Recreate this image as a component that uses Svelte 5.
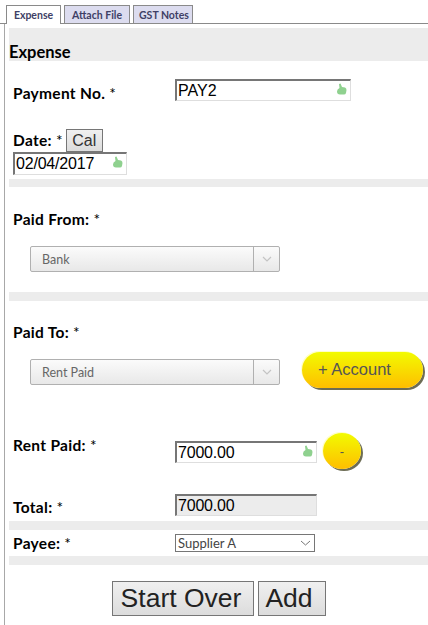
<script>
  const tabs = ["Expense", "Attach File", "GST Notes"];
</script>

{#snippet thumb()}
  <svg class="thumb" width="11" height="12" viewBox="0 0 11 12">
    <path d="M3 1 L4.5 0.5 L6 4 L9 4.5 Q10.5 5 10.5 7 L10 10 Q9.5 11.5 8 11.5 L4 11.5 Q1 11.5 1 8.5 Q1 6 3.5 5 Z" fill="#8fd18f" />
  </svg>
{/snippet}

{#snippet combo(text)}
  <div class="combo">
    <span class="combo-text">{text}</span>
    <span class="combo-arrow">
      <svg width="10" height="6" viewBox="0 0 10 6"><path d="M1 1 L5 5 L9 1" fill="none" stroke="#c4c4c4" stroke-width="1.2" /></svg>
    </span>
  </div>
{/snippet}

<div class="page">
  <div class="tabs">
    {#each tabs as tab, i}
      <div class="tab" class:active={i === 0}>{tab}</div>
    {/each}
  </div>

  <div class="panel">
    <h3 class="band heading">Expense</h3>

    <div class="row payment">
      <span class="label">Payment No. <i>*</i></span>
      <div class="field wide"><span>PAY2</span>{@render thumb()}</div>
    </div>

    <div class="date-row">
      <span class="label">Date: <i>*</i></span>
      <button class="cal">Cal</button>
    </div>
    <div class="field date"><span>02/04/2017</span>{@render thumb()}</div>

    <div class="band thin first"></div>

    <div class="label stacked from">Paid From: <i>*</i></div>
    {@render combo("Bank")}

    <div class="band thin second"></div>

    <div class="label stacked to">Paid To: <i>*</i></div>
    <div class="to-row">
      {@render combo("Rent Paid")}
      <button class="yellow account">+ Account</button>
    </div>

    <div class="row rent">
      <span class="label">Rent Paid: <i>*</i></span>
      <div class="field amount"><span>7000.00</span>{@render thumb()}</div>
      <button class="yellow minus">-</button>
    </div>

    <div class="row total">
      <span class="label">Total: <i>*</i></span>
      <div class="field amount readonly"><span>7000.00</span></div>
    </div>

    <div class="band thin third"></div>

    <div class="row payee">
      <span class="label">Payee: <i>*</i></span>
      <div class="native">
        <span>Supplier A</span>
        <svg width="11" height="6" viewBox="0 0 11 6"><path d="M1 1 L5.5 5 L10 1" fill="none" stroke="#777" stroke-width="1" /></svg>
      </div>
    </div>

    <div class="band thin fourth"></div>

    <div class="actions">
      <button class="big start">Start Over</button>
      <button class="big add">Add</button>
    </div>
  </div>
</div>

<style>
  :global(body) {
    margin: 0;
    background: #fff;
  }

  .page {
    width: 428px;
    height: 625px;
    overflow: hidden;
    font-family: "Lato", "Open Sans", sans-serif;
    color: #000;
  }

  .tabs {
    display: flex;
    gap: 3px;
    height: 18px;
    padding: 5px 0 0 6px;
    border-bottom: 1px solid #8a8a8a;
  }

  .tab {
    height: 17px;
    padding: 0 5px;
    line-height: 18px;
    border: 1px solid #8a8a8a;
    border-bottom: 0;
    background: #dcdcef;
    color: #3f3f66;
    font-size: 10.5px;
    font-weight: 700;
    white-space: nowrap;
    text-align: center;
  }

  .tab:nth-child(1) {
    width: 43px;
  }

  .tab:nth-child(2) {
    width: 54px;
  }

  .tab:nth-child(3) {
    width: 48px;
  }

  .tab.active {
    height: 18px;
    background: #fff;
  }

  .panel {
    margin-left: 4px;
    padding: 4px 0 0 4px;
    height: 610px;
    border-left: 1px solid #a8a8a8;
  }

  .band {
    background: #ececec;
  }

  .heading {
    height: 33px;
    margin: 0;
    box-sizing: border-box;
    padding-top: 15px;
    font-size: 16.5px;
    line-height: 18px;
    font-weight: 700;
  }

  .thin {
    height: 8px;
  }

  .first {
    margin-top: 4px;
  }

  .second {
    height: 9px;
    margin-top: 21px;
  }

  .third {
    height: 9px;
    margin-top: 5px;
  }

  .fourth {
    height: 9px;
    margin-top: 4px;
  }

  .label {
    font-size: 15.5px;
    line-height: 18px;
    font-weight: 700;
    letter-spacing: 0.3px;
    white-space: nowrap;
  }

  .label i {
    font-style: normal;
    font-weight: 400;
  }

  .row {
    display: flex;
    align-items: flex-start;
    padding-left: 4px;
  }

  .row .label {
    width: 162px;
    flex: none;
  }

  .field {
    box-sizing: border-box;
    position: relative;
    height: 22px;
    padding-left: 1px;
    border: 1px solid #dedede;
    border-top: 2px solid #767676;
    border-left: 2px solid #767676;
    background: #fff;
    font-family: "Liberation Sans", Arial, sans-serif;
    font-size: 16px;
    line-height: 19px;
    white-space: nowrap;
  }

  .thumb {
    position: absolute;
    right: 3px;
    top: 2px;
  }

  .payment {
    margin-top: 18px;
  }

  .payment .label {
    margin-top: 5px;
  }

  .wide {
    width: 176px;
  }

  .date-row {
    display: flex;
    align-items: flex-start;
    gap: 3px;
    height: 23px;
    margin-top: 27px;
    padding-left: 4px;
  }

  .date-row .label {
    margin-top: 2px;
  }

  .cal {
    box-sizing: border-box;
    width: 37px;
    height: 23px;
    padding: 0;
    border: 1px solid #767676;
    background: linear-gradient(#f0f0f0, #dcdcdc);
    color: #333;
    font-family: "Liberation Sans", Arial, sans-serif;
    font-size: 16px;
  }

  .date {
    width: 114px;
    margin-left: 4px;
    height: 23px;
    letter-spacing: -0.2px;
  }

  .stacked {
    padding-left: 4px;
  }

  .from {
    margin-top: 23px;
  }

  .to {
    margin-top: 22px;
  }

  .combo {
    box-sizing: border-box;
    display: flex;
    width: 250px;
    height: 26px;
    margin: 18px 0 0 21px;
    border: 1px solid #b0b0b0;
    border-radius: 2px;
    background: linear-gradient(#fbfbfb, #e8e8e8);
    flex: none;
  }

  .combo-text {
    flex: 1;
    padding-left: 11px;
    color: #666;
    font-size: 12.5px;
    line-height: 25px;
  }

  .combo-arrow {
    display: flex;
    align-items: center;
    justify-content: center;
    width: 25px;
    border-left: 1px solid #b0b0b0;
  }

  .to-row {
    display: flex;
    align-items: flex-start;
  }

  .second {
    margin-top: 20px;
  }

  .yellow {
    box-sizing: border-box;
    padding: 0;
    border: 0;
    background: linear-gradient(#f2fb00, #ffbe00);
    color: #555;
    font-family: "Liberation Sans", Arial, sans-serif;
    box-shadow: 2px 2px 0 #6d6d55, -1px -1px 0 #ffffc8;
  }

  .account {
    width: 121px;
    height: 36px;
    margin: 11px 0 0 22px;
    padding: 0 0 1px 16px;
    border-radius: 18px;
    font-size: 16.5px;
    text-align: left;
  }

  .minus {
    width: 38px;
    height: 36px;
    margin: -8px 0 0 6px;
    border-radius: 50%;
    font-size: 13px;
  }

  .rent {
    margin-top: 53px;
  }

  .rent .label {
    margin-top: -5px;
  }

  .amount {
    width: 142px;
    flex: none;
    letter-spacing: -0.2px;
  }

  .total {
    margin-top: 25px;
  }

  .total .label {
    margin-top: 4px;
  }

  .readonly {
    background: #ececec;
  }

  .payee {
    margin-top: 4px;
  }

  .native {
    box-sizing: border-box;
    display: flex;
    align-items: center;
    justify-content: space-between;
    width: 140px;
    height: 18px;
    padding: 0 3px 0 2px;
    border: 1px solid #767676;
    color: #444;
    font-size: 13px;
  }

  .actions {
    display: flex;
    gap: 4px;
    margin: 16px 0 0 103px;
  }

  .big {
    box-sizing: border-box;
    height: 35px;
    border: 1px solid #767676;
    background: linear-gradient(#f0f0f0, #dcdcdc);
    color: #222;
    font-family: "Liberation Sans", Arial, sans-serif;
    font-size: 26.5px;
  }

  .start {
    width: 142px;
    padding: 0 4px 0 0;
  }

  .add {
    width: 68px;
    padding: 0 6px 0 0;
  }
</style>
